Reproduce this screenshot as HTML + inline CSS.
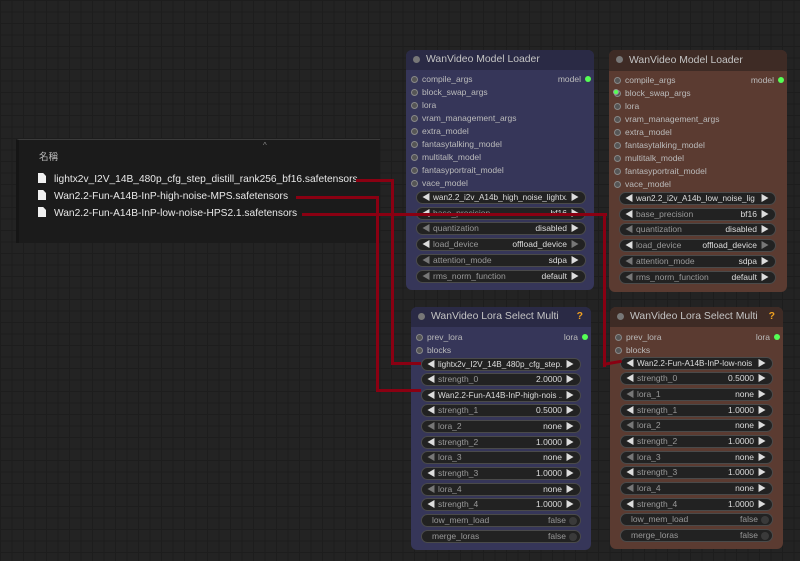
<!DOCTYPE html>
<html><head><meta charset="utf-8"><style>
*{margin:0;padding:0;box-sizing:border-box}
body{width:800px;height:561px;overflow:hidden;position:relative;font-family:"Liberation Sans","Noto Sans CJK JP",sans-serif;
background-color:#232323;
background-image:linear-gradient(#1d1d1d 1px,transparent 1px),linear-gradient(90deg,#1d1d1d 1px,transparent 1px);
background-size:11.5px 11.5px;}
.panel{position:absolute;left:16px;top:139px;width:364px;height:104px;background:#1b1b1b;border-top:1px solid #3c3c3c;border-left:3px solid #151515}
.panel .h{position:absolute;left:20px;top:9px;font-size:9.5px;color:#bbb}
.panel .car{position:absolute;left:244px;top:1px;font-size:8px;color:#888}
.f{position:absolute;font-size:10.2px;color:#e8e8e8;white-space:nowrap}
.f i{display:inline-block;width:8px;height:10px;background:#f0f0f0;margin-right:8px;vertical-align:-1px;clip-path:polygon(0 0,65% 0,100% 30%,100% 100%,0 100%)}
.node{position:absolute;border-radius:6px;overflow:hidden}
.blue{background:#363659}.blue .t{background:#2a2a45}
.brown{background:#5b3b31}.brown .t{background:#3e2b25}
.t{height:20px;position:relative;color:#c4c4c4;font-size:10.4px;line-height:20px;padding-left:20px}
.t:before{content:"";position:absolute;left:7px;top:6px;width:7px;height:7px;border-radius:50%;background:#777}
.t .q{position:absolute;right:8px;top:0;color:#f0a020;font-weight:bold}
.in{position:absolute;font-size:8.5px;color:#bbb;padding-left:11px;white-space:nowrap}
.in:before{content:"";position:absolute;left:0;top:2px;width:5px;height:5px;border-radius:50%;border:1.5px solid #888;background:#555}
.out{position:absolute;font-size:8.5px;color:#bbb;white-space:nowrap}
.out b{display:inline-block;width:6px;height:6px;border-radius:50%;background:#5f5;margin-left:4px;vertical-align:0}
.w{position:absolute;height:13px;border-radius:7px;background:#222;border:1px solid #4a4a4a;font-size:8.5px;line-height:11px;color:#999;white-space:nowrap}
.w .l{position:absolute;left:5px;color:#ddd}
.w .l.d,.w .r.d{color:#777}
.w .lab{position:absolute;left:16px}
.w .v{position:absolute;right:18px;color:#ddd}
.w .r{position:absolute;right:6px;color:#ddd}
.w.sel .lab{color:#ddd;right:18px;overflow:hidden;font-size:8.2px}
.tg .lab{left:10px}
.tg .v{right:14px;color:#999}
.tg .k{position:absolute;right:3px;top:2px;width:8px;height:8px;border-radius:50%;background:#3a3a3a}
.red{position:absolute;background:#8a0012}
</style></head><body>

<div class="panel"><div class="h">名稱</div><div class="car">^</div></div>
<div class="f" style="top:173px;left:38px"><i></i>lightx2v_I2V_14B_480p_cfg_step_distill_rank256_bf16.safetensors</div>
<div class="f" style="top:190px;left:38px"><i></i>Wan2.2-Fun-A14B-InP-high-noise-MPS.safetensors</div>
<div class="f" style="top:207px;left:38px"><i></i>Wan2.2-Fun-A14B-InP-low-noise-HPS2.1.safetensors</div>

<!-- Node 1 -->
<div class="node blue" style="left:406px;top:50px;width:188px;height:240px">
<div class="t">WanVideo Model Loader</div>
<div class="out" style="right:3px;top:24px">model<b></b></div>
<div class="in" style="left:5px;top:24px">compile_args</div>
<div class="in" style="left:5px;top:37px">block_swap_args</div>
<div class="in" style="left:5px;top:50px">lora</div>
<div class="in" style="left:5px;top:63px">vram_management_args</div>
<div class="in" style="left:5px;top:76px">extra_model</div>
<div class="in" style="left:5px;top:89px">fantasytalking_model</div>
<div class="in" style="left:5px;top:102px">multitalk_model</div>
<div class="in" style="left:5px;top:115px">fantasyportrait_model</div>
<div class="in" style="left:5px;top:128px">vace_model</div>
<div class="w sel" style="left:10px;top:141px;width:170px"><span class="l">◀</span><span class="lab">wan2.2_i2v_A14b_high_noise_lightx...</span><span class="r">▶</span></div>
<div class="w" style="left:10px;top:157px;width:170px"><span class="l">◀</span><span class="lab">base_precision</span><span class="v">bf16</span><span class="r">▶</span></div>
<div class="w" style="left:10px;top:172px;width:170px"><span class="l d">◀</span><span class="lab">quantization</span><span class="v">disabled</span><span class="r">▶</span></div>
<div class="w" style="left:10px;top:188px;width:170px"><span class="l">◀</span><span class="lab">load_device</span><span class="v">offload_device</span><span class="r d">▶</span></div>
<div class="w" style="left:10px;top:204px;width:170px"><span class="l d">◀</span><span class="lab">attention_mode</span><span class="v">sdpa</span><span class="r">▶</span></div>
<div class="w" style="left:10px;top:220px;width:170px"><span class="l d">◀</span><span class="lab">rms_norm_function</span><span class="v">default</span><span class="r">▶</span></div>
</div>

<!-- Node 2 -->
<div class="node brown" style="left:609px;top:50px;width:178px;height:242px">
<div class="t" style="height:21px;line-height:21px">WanVideo Model Loader</div>
<div class="out" style="right:3px;top:25px">model<b></b></div>
<div class="in" style="left:5px;top:25px">compile_args</div>
<div class="in" style="left:5px;top:38px">block_swap_args</div>
<div class="in" style="left:5px;top:51px">lora</div>
<div class="in" style="left:5px;top:64px">vram_management_args</div>
<div class="in" style="left:5px;top:77px">extra_model</div>
<div class="in" style="left:5px;top:90px">fantasytalking_model</div>
<div class="in" style="left:5px;top:103px">multitalk_model</div>
<div class="in" style="left:5px;top:116px">fantasyportrait_model</div>
<div class="in" style="left:5px;top:129px">vace_model</div>
<div class="w sel" style="left:10px;top:142px;width:157px"><span class="l">◀</span><span class="lab">wan2.2_i2v_A14b_low_noise_lig ...</span><span class="r">▶</span></div>
<div class="w" style="left:10px;top:158px;width:157px"><span class="l">◀</span><span class="lab">base_precision</span><span class="v">bf16</span><span class="r">▶</span></div>
<div class="w" style="left:10px;top:173px;width:157px"><span class="l d">◀</span><span class="lab">quantization</span><span class="v">disabled</span><span class="r">▶</span></div>
<div class="w" style="left:10px;top:189px;width:157px"><span class="l">◀</span><span class="lab">load_device</span><span class="v">offload_device</span><span class="r d">▶</span></div>
<div class="w" style="left:10px;top:205px;width:157px"><span class="l d">◀</span><span class="lab">attention_mode</span><span class="v">sdpa</span><span class="r">▶</span></div>
<div class="w" style="left:10px;top:221px;width:157px"><span class="l d">◀</span><span class="lab">rms_norm_function</span><span class="v">default</span><span class="r">▶</span></div>
</div>
<div style="position:absolute;left:613px;top:89px;width:6px;height:6px;border-radius:50%;background:#5f5;border:1px solid #999"></div>

<!-- Node 3 -->
<div class="node blue" style="left:411px;top:307px;width:180px;height:243px">
<div class="t">WanVideo Lora Select Multi<span class="q">?</span></div>
<div class="out" style="right:3px;top:25px">lora<b></b></div>
<div class="in" style="left:5px;top:25px">prev_lora</div>
<div class="in" style="left:5px;top:38px">blocks</div>
<div class="w sel" style="left:10px;top:51px;width:160px"><span class="l">◀</span><span class="lab">lightx2v_I2V_14B_480p_cfg_step...</span><span class="r">▶</span></div>
<div class="w" style="left:10px;top:66px;width:160px"><span class="l">◀</span><span class="lab">strength_0</span><span class="v">2.0000</span><span class="r">▶</span></div>
<div class="w sel" style="left:10px;top:82px;width:160px"><span class="l">◀</span><span class="lab">Wan2.2-Fun-A14B-InP-high-nois ...</span><span class="r">▶</span></div>
<div class="w" style="left:10px;top:97px;width:160px"><span class="l">◀</span><span class="lab">strength_1</span><span class="v">0.5000</span><span class="r">▶</span></div>
<div class="w" style="left:10px;top:113px;width:160px"><span class="l d">◀</span><span class="lab">lora_2</span><span class="v">none</span><span class="r">▶</span></div>
<div class="w" style="left:10px;top:129px;width:160px"><span class="l">◀</span><span class="lab">strength_2</span><span class="v">1.0000</span><span class="r">▶</span></div>
<div class="w" style="left:10px;top:144px;width:160px"><span class="l d">◀</span><span class="lab">lora_3</span><span class="v">none</span><span class="r">▶</span></div>
<div class="w" style="left:10px;top:160px;width:160px"><span class="l">◀</span><span class="lab">strength_3</span><span class="v">1.0000</span><span class="r">▶</span></div>
<div class="w" style="left:10px;top:176px;width:160px"><span class="l d">◀</span><span class="lab">lora_4</span><span class="v">none</span><span class="r">▶</span></div>
<div class="w" style="left:10px;top:191px;width:160px"><span class="l">◀</span><span class="lab">strength_4</span><span class="v">1.0000</span><span class="r">▶</span></div>
<div class="w tg" style="left:10px;top:207px;width:160px"><span class="lab">low_mem_load</span><span class="v">false</span><span class="k"></span></div>
<div class="w tg" style="left:10px;top:223px;width:160px"><span class="lab">merge_loras</span><span class="v">false</span><span class="k"></span></div>
</div>

<!-- Node 4 -->
<div class="node brown" style="left:610px;top:307px;width:173px;height:242px">
<div class="t">WanVideo Lora Select Multi<span class="q">?</span></div>
<div class="out" style="right:3px;top:25px">lora<b></b></div>
<div class="in" style="left:5px;top:25px">prev_lora</div>
<div class="in" style="left:5px;top:38px">blocks</div>
<div class="w sel" style="left:10px;top:50px;width:153px"><span class="l">◀</span><span class="lab">Wan2.2-Fun-A14B-InP-low-nois ...</span><span class="r">▶</span></div>
<div class="w" style="left:10px;top:65px;width:153px"><span class="l">◀</span><span class="lab">strength_0</span><span class="v">0.5000</span><span class="r">▶</span></div>
<div class="w" style="left:10px;top:81px;width:153px"><span class="l d">◀</span><span class="lab">lora_1</span><span class="v">none</span><span class="r">▶</span></div>
<div class="w" style="left:10px;top:97px;width:153px"><span class="l">◀</span><span class="lab">strength_1</span><span class="v">1.0000</span><span class="r">▶</span></div>
<div class="w" style="left:10px;top:112px;width:153px"><span class="l d">◀</span><span class="lab">lora_2</span><span class="v">none</span><span class="r">▶</span></div>
<div class="w" style="left:10px;top:128px;width:153px"><span class="l">◀</span><span class="lab">strength_2</span><span class="v">1.0000</span><span class="r">▶</span></div>
<div class="w" style="left:10px;top:144px;width:153px"><span class="l d">◀</span><span class="lab">lora_3</span><span class="v">none</span><span class="r">▶</span></div>
<div class="w" style="left:10px;top:159px;width:153px"><span class="l">◀</span><span class="lab">strength_3</span><span class="v">1.0000</span><span class="r">▶</span></div>
<div class="w" style="left:10px;top:175px;width:153px"><span class="l d">◀</span><span class="lab">lora_4</span><span class="v">none</span><span class="r">▶</span></div>
<div class="w" style="left:10px;top:191px;width:153px"><span class="l">◀</span><span class="lab">strength_4</span><span class="v">1.0000</span><span class="r">▶</span></div>
<div class="w tg" style="left:10px;top:206px;width:153px"><span class="lab">low_mem_load</span><span class="v">false</span><span class="k"></span></div>
<div class="w tg" style="left:10px;top:222px;width:153px"><span class="lab">merge_loras</span><span class="v">false</span><span class="k"></span></div>
</div>

<!-- red links -->
<div class="red" style="left:356px;top:179px;width:38px;height:3px"></div>
<div class="red" style="left:391px;top:179px;width:3px;height:185px"></div>
<div class="red" style="left:391px;top:362px;width:30px;height:3px"></div>
<div class="red" style="left:296px;top:196px;width:83px;height:3px"></div>
<div class="red" style="left:376px;top:196px;width:3px;height:195px"></div>
<div class="red" style="left:376px;top:389px;width:45px;height:3px"></div>
<div class="red" style="left:302px;top:213px;width:305px;height:3px"></div>
<div class="red" style="left:603px;top:213px;width:3px;height:154px"></div>
<div class="red" style="left:603px;top:363px;width:19px;height:3px;transform:rotate(-10deg);transform-origin:left"></div>
</body></html>
